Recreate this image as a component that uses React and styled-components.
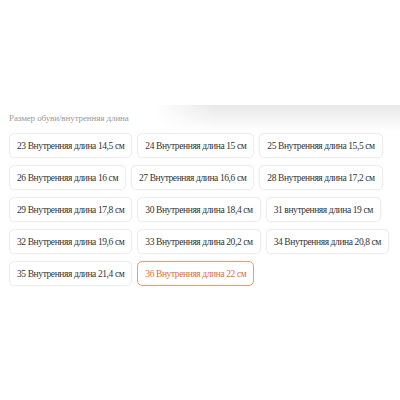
import React from "react";
import styled, { createGlobalStyle } from "styled-components";

const Global = createGlobalStyle`
  html, body { margin: 0; padding: 0; background: #fff; }
  body { width: 400px; height: 400px; overflow: hidden; font-family: "Liberation Serif", "Times New Roman", serif; }
`;

const Page = styled.div`
  position: relative;
  width: 400px;
  height: 400px;
  box-sizing: border-box;
  padding: 112px 10px 0 9px;
  font-family: "Liberation Serif", "Times New Roman", serif;
  &::before {
    content: "";
    position: absolute;
    left: 155px;
    right: 0;
    top: 105px;
    height: 26px;
    background: linear-gradient(to bottom, #e8e8e8 0%, #f2f2f2 45%, #ffffff 100%);
    -webkit-mask-image: linear-gradient(to right, transparent 0, #000 60px);
    mask-image: linear-gradient(to right, transparent 0, #000 60px);
    pointer-events: none;
  }
`;

const Label = styled.div`
  position: relative;
  font-size: 9px;
  letter-spacing: -0.1px;
  line-height: 12px;
  color: #9a9a9a;
  margin-bottom: 9px;
`;

const Options = styled.div`
  position: relative;
  display: flex;
  flex-wrap: wrap;
  gap: 7px 5px;
`;

const Option = styled.div`
  box-sizing: border-box;
  height: 25px;
  padding: 0 7px;
  display: flex;
  align-items: center;
  font-size: 9.5px;
  letter-spacing: -0.4px;
  color: ${(p) => (p.$active ? "#ea6a33" : "#333")};
  background: #fff;
  border: 1px solid ${(p) => (p.$active ? "#f39a72" : "#ececec")};
  border-radius: 5px;
  box-shadow: ${(p) => (p.$active ? "none" : "0 0 2px rgba(0,0,0,0.04)")};
  white-space: nowrap;
`;

const items = [
  "23 Внутренняя длина 14,5 см",
  "24 Внутренняя длина 15 см",
  "25 Внутренняя длина 15,5 см",
  "26 Внутренняя длина 16 см",
  "27 Внутренняя длина 16,6 см",
  "28 Внутренняя длина 17,2 см",
  "29 Внутренняя длина 17,8 см",
  "30 Внутренняя длина 18,4 см",
  "31 внутренняя длина 19 см",
  "32 Внутренняя длина 19,6 см",
  "33 Внутренняя длина 20,2 см",
  "34 Внутренняя длина 20,8 см",
  "35 Внутренняя длина 21,4 см",
  "36 Внутренняя длина 22 см",
];

export default function App() {
  return (
    <>
      <Global />
      <Page>
        <Label>Размер обуви/внутренняя длина</Label>
        <Options>
          {items.map((t, i) => (
            <Option key={t} $active={i === items.length - 1}>
              {t}
            </Option>
          ))}
        </Options>
      </Page>
    </>
  );
}
